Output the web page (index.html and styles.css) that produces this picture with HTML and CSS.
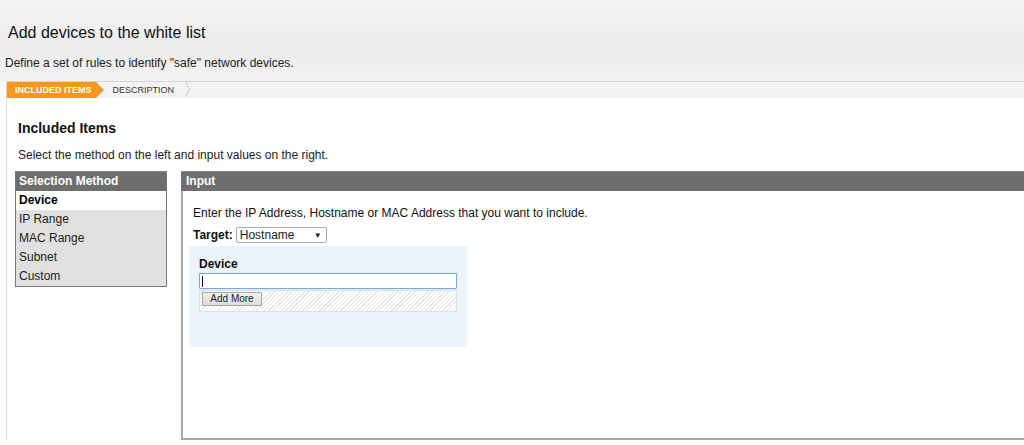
FILE: index.html
```html
<!DOCTYPE html>
<html>
<head>
<meta charset="utf-8">
<link rel="stylesheet" href="styles.css">
</head>
<body>
<div class="header">
  <h1 class="title">Add devices to the white list</h1>
  <p class="subtitle">Define a set of rules to identify "safe" network devices.</p>
</div>
<div class="page">
  <div class="tabs">
    <div class="tab active">INCLUDED ITEMS</div>
    <div class="tab">DESCRIPTION</div>
  </div>
  <div class="content">
    <h2 class="heading">Included Items</h2>
    <p class="intro">Select the method on the left and input values on the right.</p>
    <div class="columns">
      <div class="methods">
        <div class="box-head">Selection Method</div>
        <div class="method selected">Device</div>
        <div class="method">IP Range</div>
        <div class="method">MAC Range</div>
        <div class="method">Subnet</div>
        <div class="method">Custom</div>
      </div>
      <div class="input-panel">
        <div class="box-head">Input</div>
        <div class="input-body">
          <p class="hint">Enter the IP Address, Hostname or MAC Address that you want to include.</p>
          <div class="target-row">
            <span class="target-label">Target:</span>
            <div class="select"><span>Hostname</span><span class="caret">&#9660;</span></div>
          </div>
          <div class="device-box">
            <div class="device-label">Device</div>
            <div class="text-field"><span class="cursor"></span></div>
            <div class="add-row"><button class="add-btn">Add More</button></div>
          </div>
        </div>
      </div>
    </div>
  </div>
</div>
</body>
</html>
```
FILE: styles.css
```css
html, body {
  margin: 0;
  padding: 0;
  background: #ffffff;
  font-family: "Liberation Sans", Arial, sans-serif;
  color: #222;
  height: 445px;
  overflow: hidden;
}
.header {
  height: 81px;
  background: linear-gradient(#f4f4f4, #ececec 60%, #f2f2f2);
  overflow: hidden;
}
.title {
  margin: 0;
  padding: 22px 0 0 8px;
  font-size: 16px;
  font-weight: normal;
  color: #111;
  line-height: 22px;
}
.subtitle {
  margin: 0;
  padding: 12px 0 0 5px;
  font-size: 12px;
  line-height: 14px;
  color: #222;
}
.page {
  margin-left: 6px;
  border-left: 1px solid #dcdcdc;
}
.tabs {
  display: flex;
  height: 16px;
  border-top: 1px solid #d6d6d6;
  background: #f3f3f3;
  align-items: stretch;
}
.tab {
  position: relative;
  font-size: 9px;
  line-height: 16px;
  color: #333;
  padding: 0 18px 0 9px;
}
.tab::after {
  content: "";
  position: absolute;
  right: 0;
  top: 1px;
  width: 10px;
  height: 10px;
  border-top: 1px solid #c8c8c8;
  border-right: 1px solid #c8c8c8;
  transform: translateX(-1px) translateY(1px) scaleX(0.6) rotate(45deg);
  transform-origin: center;
}
.tab.active {
  background: #f7981d;
  color: #fff;
  font-weight: bold;
  padding: 0 4px 0 8px;
  margin-right: 8px;
}
.tab.active::after {
  right: -8px;
  top: 0;
  width: 0;
  height: 0;
  border-top: 8px solid transparent;
  border-bottom: 8px solid transparent;
  border-left: 8px solid #f7981d;
  border-right: none;
  transform: none;
}
.content {
  padding: 20px 0 0 8px;
}
.heading {
  margin: 0 0 0 3px;
  font-size: 14px;
  font-weight: bold;
  line-height: 20px;
  color: #111;
}
.intro {
  margin: 9px 0 0 3px;
  font-size: 12px;
  line-height: 16px;
  color: #222;
}
.columns {
  display: flex;
  margin-top: 8px;
  gap: 14px;
}
.box-head {
  background: #6e6e6e;
  color: #fff;
  font-weight: bold;
  font-size: 12px;
  line-height: 18px;
  height: 19px;
  padding-left: 3px;
  border-top: 1px solid #8a8a8a;
}
.methods {
  width: 150px;
  border: 1px solid #777;
  border-top: none;
  background: #e0e0e0;
  align-self: flex-start;
}
.method {
  font-size: 12px;
  line-height: 19px;
  height: 19px;
  padding-left: 3px;
  color: #222;
}
.method.selected {
  background: #fff;
  color: #000;
  font-weight: bold;
}
.input-panel {
  flex: 1;
  height: 267px;
  border-left: 2px solid #a8a8a8;
  border-bottom: 2px solid #a8a8a8;
}
.input-panel .box-head {
  margin-left: -2px;
  padding-left: 5px;
}
.input-body {
  padding: 14px 0 0 6px;
}
.hint {
  margin: 0 0 0 4px;
  font-size: 12px;
  line-height: 16px;
  color: #111;
}
.target-row {
  display: flex;
  align-items: center;
  margin: 6px 0 0 4px;
  font-size: 12px;
}
.target-label {
  font-weight: bold;
  color: #111;
}
.select {
  display: flex;
  justify-content: space-between;
  align-items: center;
  margin-left: 3px;
  width: 82px;
  height: 14px;
  padding: 0 4px 0 3px;
  border: 1px solid #a9a9a9;
  border-radius: 2px;
  background: #fff;
  font-size: 12px;
  color: #222;
}
.caret {
  font-size: 8px;
}
.device-box {
  margin-top: 3px;
  width: 258px;
  height: 90px;
  padding: 11px 10px 0 10px;
  background: #eaf4fa;
}
.device-label {
  font-size: 12px;
  font-weight: bold;
  color: #111;
  line-height: 14px;
}
.text-field {
  margin-top: 2px;
  height: 14px;
  border: 1px solid #7ea6d8;
  box-shadow: 0 0 1px #a9c8ee;
  border-radius: 1px;
  background: #fff;
  position: relative;
}
.cursor {
  position: absolute;
  left: 2px;
  top: 2px;
  width: 1px;
  height: 11px;
  background: #000;
}
.add-row {
  margin-top: 1px;
  height: 18px;
  padding: 1px 2px;
  border: 1px solid #d6e3ee;
  background: repeating-linear-gradient(135deg, #ffffff 0 2px, #e6e6e6 2px 3px);
}
.add-btn {
  display: block;
  height: 14px;
  width: 60px;
  padding: 0;
  font-family: "Liberation Sans", Arial, sans-serif;
  font-size: 10px;
  line-height: 12px;
  color: #222;
  background: linear-gradient(#f2f2f2, #dcdcdc);
  border: 1px solid #a7a7a7;
  border-radius: 1px;
}
```
